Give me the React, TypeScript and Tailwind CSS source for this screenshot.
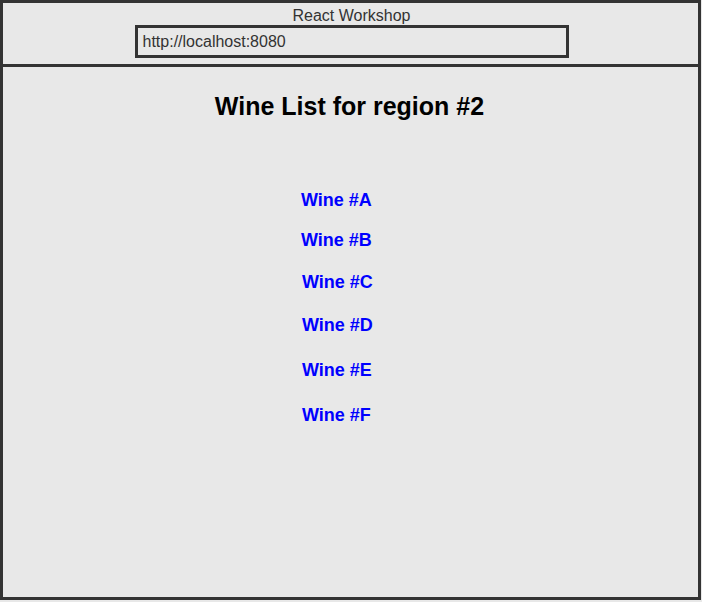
const wines = [
  { name: "Wine #A", mt: "mt-[72px]", ml: "ml-0" },
  { name: "Wine #B", mt: "mt-[22px]", ml: "ml-0" },
  { name: "Wine #C", mt: "mt-[24px]", ml: "ml-px" },
  { name: "Wine #D", mt: "mt-[25px]", ml: "ml-px" },
  { name: "Wine #E", mt: "mt-[27px]", ml: "ml-px" },
  { name: "Wine #F", mt: "mt-[27px]", ml: "ml-px" },
];

const App = () => {
  return (
    <div className="w-[702px] h-[602px] bg-[#e8e8e8] font-['Liberation_Sans',Arial,sans-serif]">
      <div className="w-[701px] h-[600px] border-[3px] border-[#333] flex flex-col">
        {/* Browser chrome */}
        <div className="h-[64px] border-b-[3px] border-[#333] flex flex-col items-center">
          <p className="text-[16px] leading-none text-[#333] mt-[5px] ml-[2px]">React Workshop</p>
          <div className="mt-[1px] w-[434px] h-[33px] border-[3px] border-[#333] ml-[2px] flex items-center px-[5px]">
            <span className="text-[16px] leading-none text-[#333]">http://localhost:8080</span>
          </div>
        </div>

        {/* Page */}
        <div className="flex-1 flex flex-col">
          <h1 className="text-center text-[25px] font-bold leading-none text-black mt-[27px] mr-[2px]">
            Wine List for region #2
          </h1>
          <ul className="flex flex-col pl-[298px]">
            {wines.map((w) => (
              <li key={w.name} className={`${w.mt} ${w.ml} leading-none`}>
                <a href="#" className="text-[18px] font-bold leading-none text-[#0000ff]">
                  {w.name}
                </a>
              </li>
            ))}
          </ul>
        </div>
      </div>
    </div>
  );
};

export default App;
